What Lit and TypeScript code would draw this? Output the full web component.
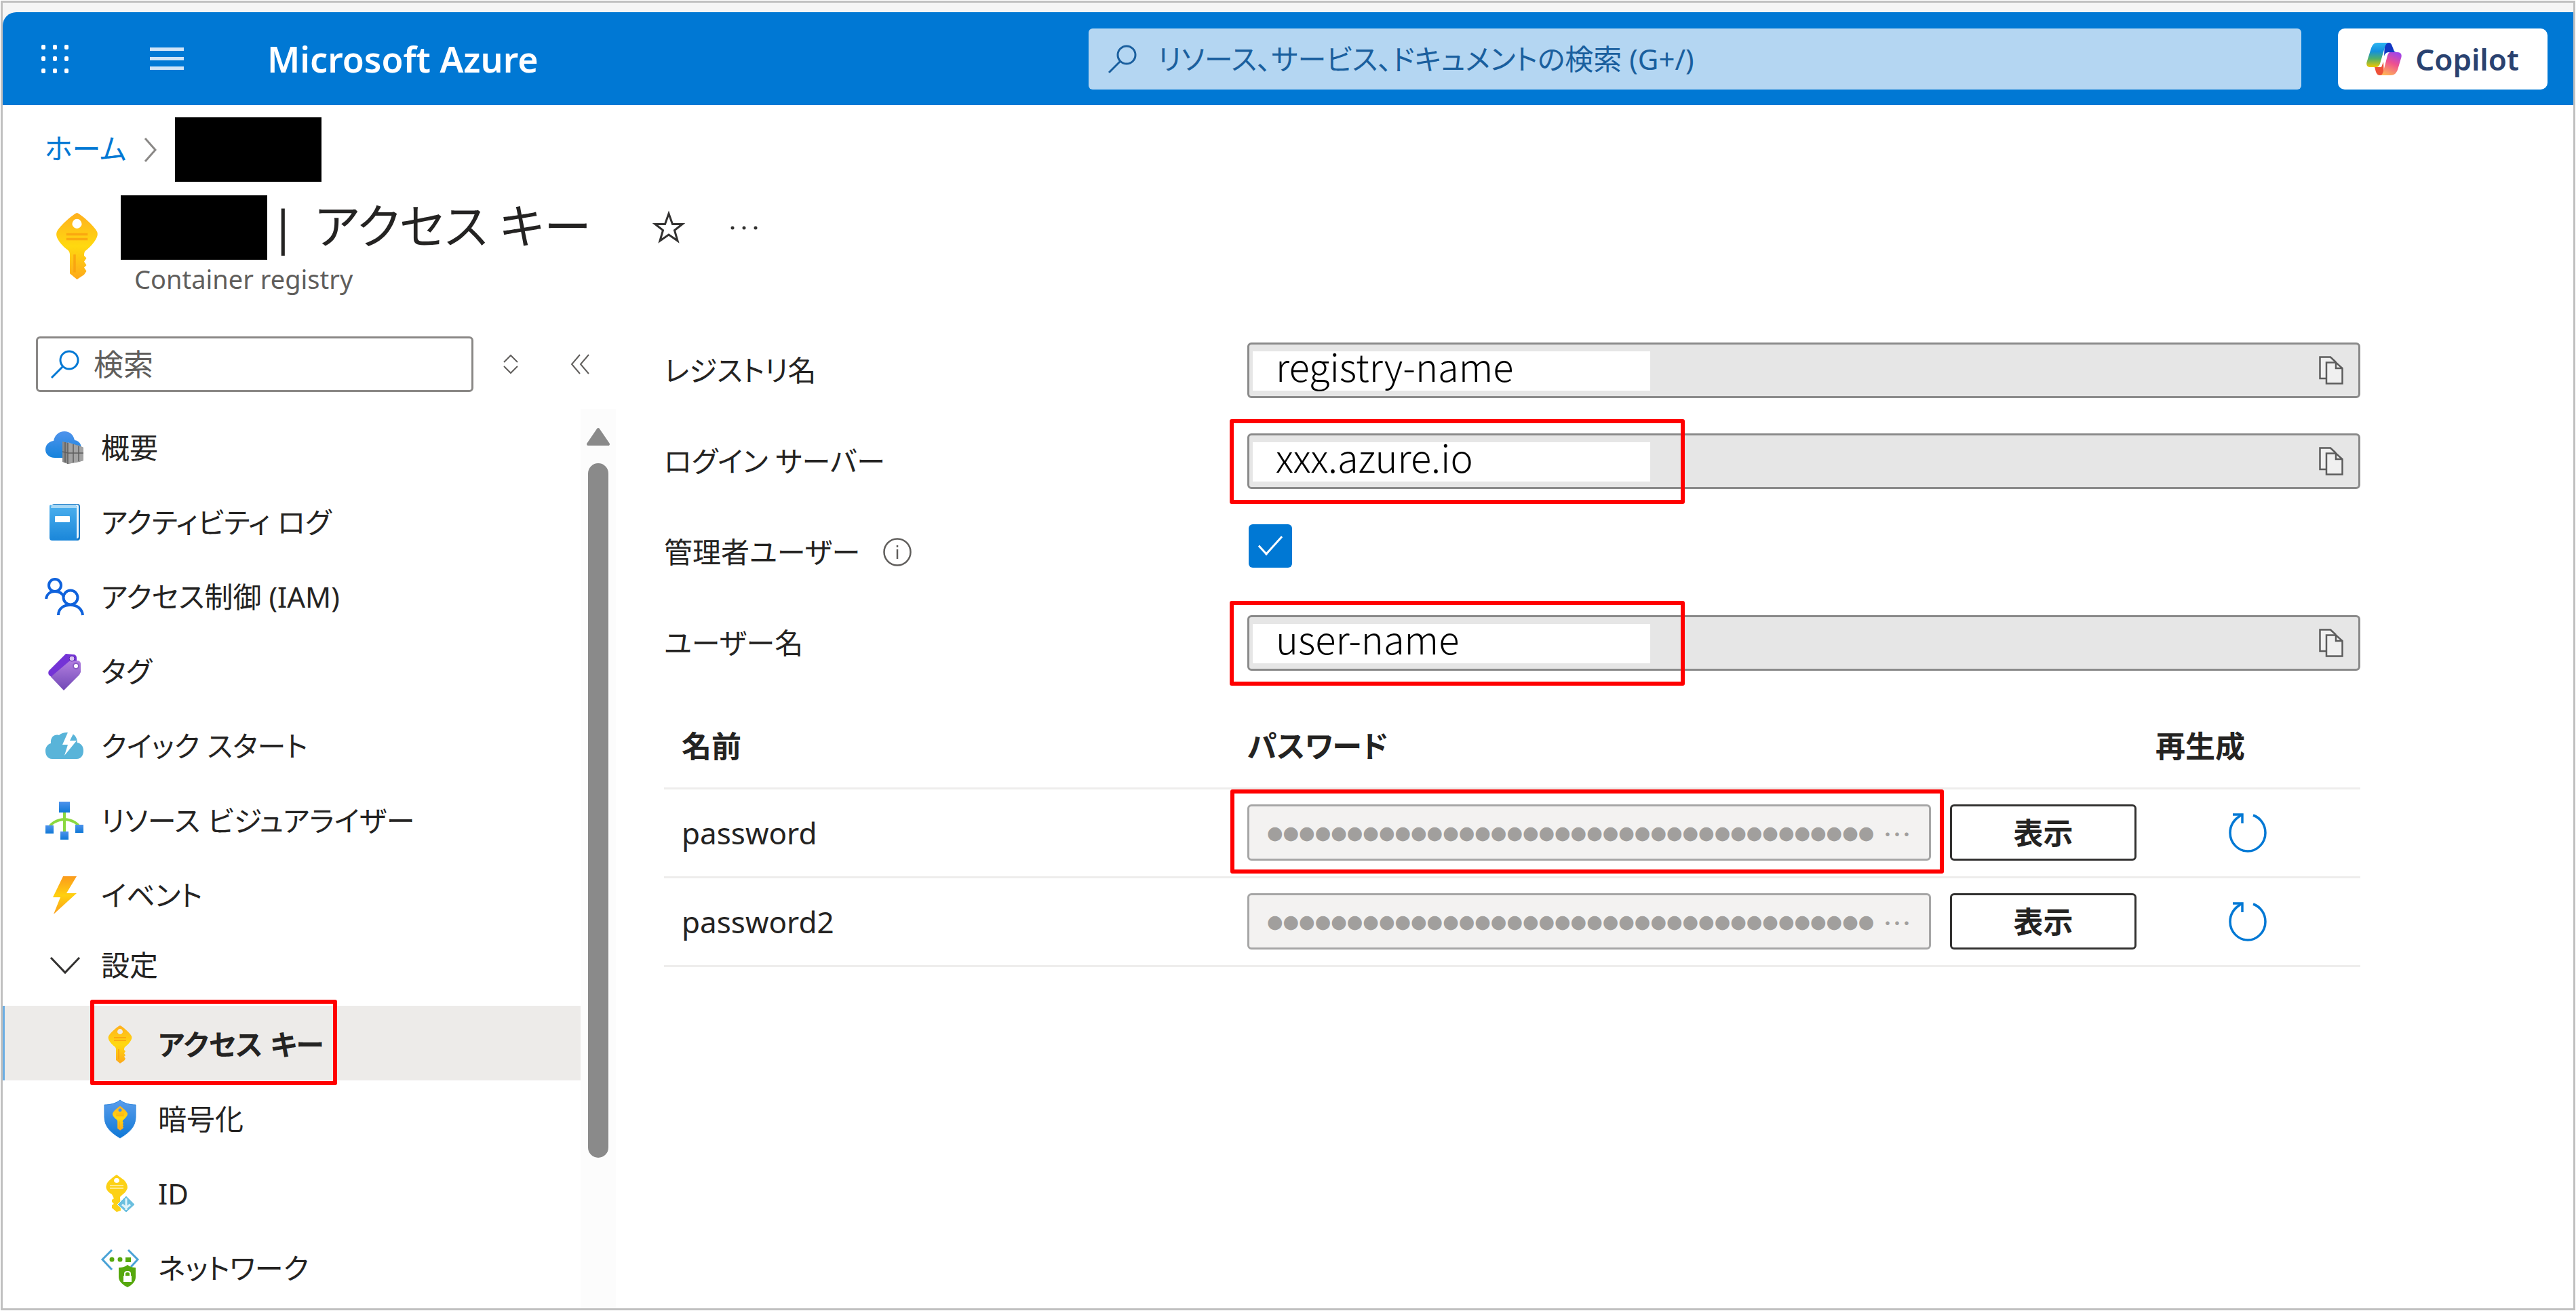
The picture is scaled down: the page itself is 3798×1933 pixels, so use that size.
import { LitElement, html, svg, css, nothing } from "lit";
import { customElement } from "lit/decorators.js";
import { classMap } from "lit/directives/class-map.js";

const keyShape = svg`
  <linearGradient id="gold" x1="0" y1="0" x2="0" y2="1">
    <stop offset="0" stop-color="#ffb01f"></stop><stop offset=".5" stop-color="#ffd90f"></stop><stop offset="1" stop-color="#fda81c"></stop>
  </linearGradient>
  <path fill="url(#gold)" fill-rule="evenodd" d="M18 0C20 0 33 11 35 16C37 21 29 29 25 32C24 33 24 35 24 36L26 38L24 41L26 44L24 46L26 49L24 52L18 56L12 51V35C12 33 11 32 10 31C6 28 -1 21 1 16C3 11 16 0 18 0ZM18 5C16 5 14 7 14 9.500C14 11 16 13 18 13C20 13 22 11 22 9.500C22 7 20 5 18 5Z"></path>
  <path stroke="#f9a010" stroke-width="2" d="M9 18H27M9 22H27M16 35V50" opacity=".8"></path>`;

const icons: Record<string, unknown> = {
  overview: svg`<svg class="ico" viewBox="0 0 56 56" aria-hidden="true">
    <linearGradient id="cl" x1="0" y1="0" x2="0" y2="1"><stop offset="0" stop-color="#4f93ec"></stop><stop offset="1" stop-color="#1583dc"></stop></linearGradient>
    <path fill="url(#cl)" d="M14 43C5 43 0 37 0 31C0 24 5 19 12 18C14 9 20 4 28 4C36 4 41 9 43 17C50 18 53 23 53 30C53 38 48 43 41 43Z"></path>
    <path fill="#8b8b8b" d="M25 19L50 25L56 28V47L50 49L33 52L25 49Z"></path>
    <path fill="#a3a3a3" d="M33 20L56 28V47L33 52Z"></path>
    <path stroke="#5f5f5f" stroke-width="1.500" fill="none" d="M25 34L33 36L56 36M33 21V52M41 23V50M49 26V48M29 20V50"></path></svg>`,
  log: svg`<svg class="ico" viewBox="0 0 56 56" aria-hidden="true">
    <linearGradient id="bk" x1="0" y1="0" x2="0" y2="1"><stop offset="0" stop-color="#4cb0ee"></stop><stop offset="1" stop-color="#1a86d9"></stop></linearGradient>
    <rect x="9" y="1" width="42" height="54" rx="4" fill="#1677c4"></rect><rect x="10" y="2" width="39" height="50" rx="3" fill="#e8f4fc"></rect>
    <path fill="url(#bk)" d="M6 5C6 2 8 2 10 4H46V55H10C8 55 6 54 6 51Z"></path><path fill="#a8d8f5" d="M9 2H45L46 7H8Z"></path>
    <rect x="14" y="19" width="22" height="9" rx="1" fill="#fff"></rect></svg>`,
  iam: svg`<svg class="ico" viewBox="0 0 56 56" aria-hidden="true"><g fill="none" stroke="#0f62dc" stroke-width="4">
    <circle cx="14" cy="11" r="9"></circle><circle cx="37" cy="29" r="10.500"></circle>
    <path d="M1 31C2 23 8 20 14 20C20 20 25 23 27 28M19 55C19 45 27 40 37 40C47 40 54 46 55 55"></path></g></svg>`,
  tag: svg`<svg class="ico" viewBox="0 0 56 56" aria-hidden="true">
    <linearGradient id="tg" x1="0" y1="0" x2="0" y2="1"><stop offset="0" stop-color="#b27fe0"></stop><stop offset="1" stop-color="#7148b5"></stop></linearGradient>
    <path fill="#7433d6" d="M30 2L41 3C44 3 46 5 46 8L46 18L13 40L5 33C4 31 4 29 5 27Z"></path>
    <path fill="url(#tg)" d="M35 13L47 12C50 12 52 14 52 17V29L50 33L27 56L8 36Z"></path>
    <circle cx="39" cy="9" r="4" fill="#d9c1f1" stroke="#5a25b0"></circle><circle cx="45" cy="20" r="4" fill="#fff" stroke="#8a5cc4" stroke-width="2"></circle></svg>`,
  quick: svg`<svg class="ico" viewBox="0 0 56 56" aria-hidden="true">
    <path fill="#59b4d9" d="M10 47C3 47 0 41 0 35C0 29 4 25 8 24C7 14 14 10 20 12C25 7 35 7 40 10C45 13 47 18 47 23C53 24 56 29 56 35C56 41 53 47 46 47Z"></path>
    <path fill="#fff" d="M33 8H42L36 20H46L28 42L33 26H25Z"></path></svg>`,
  graph: svg`<svg class="ico" viewBox="0 0 56 56" aria-hidden="true">
    <linearGradient id="sq" x1="0" y1="0" x2="0" y2="1"><stop offset="0" stop-color="#4f93ec"></stop><stop offset="1" stop-color="#0f78d6"></stop></linearGradient>
    <path fill="none" stroke="#8bd83f" stroke-width="4" d="M28 15V45M6 38C8 32 16 27 28 26C40 27 48 32 50 38"></path>
    <g fill="url(#sq)"><rect x="20" y="0" width="16" height="16"></rect><rect x="0" y="35" width="12" height="12"></rect><rect x="22" y="44" width="12" height="12"></rect><rect x="44" y="34" width="12" height="12"></rect></g></svg>`,
  bolt: svg`<svg class="ico" viewBox="0 0 56 56" aria-hidden="true">
    <linearGradient id="bo" x1="0" y1="0" x2="0" y2="1"><stop offset="0" stop-color="#fb9a1c"></stop><stop offset=".5" stop-color="#ffd00f"></stop><stop offset="1" stop-color="#fa9f1c"></stop></linearGradient>
    <path fill="url(#bo)" d="M26 0H46L31 25H46L12 56L22 31H11Z"></path></svg>`,
  chevron: svg`<svg class="ico" viewBox="0 0 56 56" aria-hidden="true"><path fill="none" stroke="#323130" stroke-width="3" d="M8 17L29 39L50 17"></path></svg>`,
  key: svg`<svg class="ico" viewBox="-10 0 56 56" aria-hidden="true">${keyShape}</svg>`,
  shield: svg`<svg class="ico" viewBox="0 0 56 56" aria-hidden="true">
    <linearGradient id="sh" x1="0" y1="0" x2="0" y2="1"><stop offset="0" stop-color="#5a9dec"></stop><stop offset="1" stop-color="#0f78d6"></stop></linearGradient>
    <path fill="url(#sh)" stroke="#2b84dc" d="M28 0C34 5 43 7 51 7V25C51 40 40 49 28 56C16 49 5 40 5 25V7C13 7 22 5 28 0Z"></path>
    <g transform="translate(16.500 9) scale(.64)">${keyShape}</g></svg>`,
  identity: svg`<svg class="ico" viewBox="0 0 56 56" aria-hidden="true">
    <path fill="#fcd116" fill-rule="evenodd" d="M23 0L34 8C39 13 40 19 38 22C36 27 30 30 28 33L29 53L23 55L16 49V45L19 43L16 40V37L19 35L16 29C9 25 6 20 8 15C9 10 17 4 23 0ZM23 5C20 5 19 7 19 9C19 11 21 12 23 12C25 12 27 11 27 9C27 7 26 5 23 5Z"></path>
    <path stroke="#ffe98a" stroke-width="2" d="M13 16H33M13 20H33"></path>
    <path fill="#6bbfdf" stroke="#fff" stroke-width="1" d="M37 31L50 44L37 56L24 44Z"></path><path stroke="#dff3fa" stroke-width="3" fill="none" d="M37 35V52M31 44L37 49L43 44"></path></svg>`,
  network: svg`<svg class="ico" viewBox="0 0 56 56" aria-hidden="true">
    <path fill="none" stroke="#4aa3d6" stroke-width="3" d="M16 1L2 15L16 30M40 1L54 15L44 26"></path>
    <g fill="#56a80d"><circle cx="16" cy="15" r="3.500"></circle><circle cx="28" cy="15" r="3.500"></circle><rect x="36" y="12" width="8" height="7"></rect>
    <path d="M39 23C43 26 47 27 51 27V41C51 48 45 53 39 56C33 53 26 48 26 41V27C31 27 35 26 39 23Z"></path></g>
    <rect x="33" y="39" width="12" height="9" fill="#fff"></rect><path fill="none" stroke="#fff" stroke-width="2" d="M35 40V36C35 32 43 32 43 36V40"></path></svg>`,
};

const magnifier = svg`<svg class="glass" viewBox="0 0 44 42" aria-hidden="true"><g fill="none" stroke="currentColor" stroke-width="3"><circle cx="28" cy="15" r="13"></circle><path d="M19 24L2 41"></path></g></svg>`;
const copyIcon = svg`<svg class="copy-ico" viewBox="0 0 36 42" aria-hidden="true"><g fill="#f0f0f0" stroke="#5c5c5c" stroke-width="2.500"><path d="M10 33H1.500V1.500H17L25 9"></path><path d="M11 9.500H25L34.500 18V40.500H11Z"></path><path fill="none" d="M25 9.500V18H34.500"></path></g></svg>`;
const refreshIcon = svg`<svg class="refresh-ico" viewBox="0 0 56 58" aria-hidden="true"><g fill="none" stroke="#0078d4" stroke-width="3.500"><path d="M36 3C47 7 54 17 54 29C54 44 42 56 28 56C14 56 2 44 2 29C2 17 9 8 20 2"></path><path d="M6 2H20V15"></path></g></svg>`;
const infoIcon = svg`<svg class="info-ico" viewBox="0 0 42 42" aria-hidden="true"><circle cx="21" cy="21" r="19.500" fill="none" stroke="#605e5c" stroke-width="2.500"></circle><path stroke="#605e5c" stroke-width="2.500" d="M21 17V31M21 11V14"></path></svg>`;

interface NavItem { label: string; icon: string; kind?: "group" | "child"; selected?: boolean }

const navItems: NavItem[] = [
  { label: "概要", icon: "overview" },
  { label: "アクティビティ ログ", icon: "log" },
  { label: "アクセス制御 (IAM)", icon: "iam" },
  { label: "タグ", icon: "tag" },
  { label: "クイック スタート", icon: "quick" },
  { label: "リソース ビジュアライザー", icon: "graph" },
  { label: "イベント", icon: "bolt" },
  { label: "設定", icon: "chevron", kind: "group" },
  { label: "アクセス キー", icon: "key", kind: "child", selected: true },
  { label: "暗号化", icon: "shield", kind: "child" },
  { label: "ID", icon: "identity", kind: "child" },
  { label: "ネットワーク", icon: "network", kind: "child" },
];

@customElement("app-root")
export class AppRoot extends LitElement {
  static styles = css`
    :host {
      display: block;
      box-sizing: border-box;
      min-height: 100vh;
      padding: 1px;
      background: #fff;
      color: #242322;
      font: 42px/60px "Noto Sans", "Noto Sans CJK JP", sans-serif;
      font-feature-settings: "palt";
    }
    *, *::before, *::after { box-sizing: border-box; }
    input, button { font: inherit; font-feature-settings: inherit; color: inherit; margin: 0; }
    button { padding: 0; border: 0; background: none; display: flex; align-items: center; justify-content: center; }
    a { color: inherit; text-decoration: none; }
    svg { display: block; flex: none; overflow: visible; }
    .frame { border: 3px solid #c0c0c0; min-height: calc(100vh - 2px); display: flex; flex-direction: column; }
    .strip { background: #f5f5f5; padding-top: 14px; }
    .topbar { height: 137px; background: #0078d4; border-top-left-radius: 20px; display: flex; align-items: center; padding: 0 38px 0 57px; gap: 54px; }
    .topbar-start { flex: 0 0 1490px; display: flex; align-items: center; }
    .apps { width: 40px; height: 42px; margin-right: 120px; }
    .menu { width: 50px; height: 36px; margin-right: 123px; }
    .brand { color: #fff; font-weight: 600; font-size: 52px; }
    .global-search { flex: 1; height: 90px; display: flex; align-items: center; gap: 30px; padding: 0 28px; border-radius: 6px; background: #b4d6f2; color: #1a5f9e; }
    .global-search input, .side-search input { flex: 1; min-width: 0; border: 0; padding: 0; background: transparent; outline: 0; height: 60px; }
    .global-search input::placeholder { color: #1a5f9e; opacity: 1; }
    .side-search input { font-size: 44px; }
    .glass { width: 44px; height: 42px; }
    .copilot { flex: 0 0 309px; height: 90px; border-radius: 10px; background: #fff; color: #2a4270; font-size: 44px; font-weight: 600; gap: 20px; }
    .copilot-ico { width: 52px; height: 48px; }

    .crumbs { display: flex; align-items: center; gap: 27px; padding: 18px 0 0 62px; height: 113px; }
    .crumbs a { color: #0078d4; padding-bottom: 4px; }
    .crumb-sep { width: 18px; height: 34px; }
    .redacted { display: block; width: 216px; height: 95px; background: #000; flex: none; }
    .title-row { display: flex; padding: 20px 0 8px 78px; align-items: flex-start; }
    .title-ico { width: 63px; height: 98px; margin: 26px 33px 0 0; }
    .heading { display: flex; flex-direction: column; }
    .heading-line { display: flex; align-items: center; height: 95px; }
    h1 { margin: 0 92px 6px 4px; font-weight: 400; font-size: 70px; line-height: 88px; display: flex; gap: 28px; }
    .star { width: 46px; height: 46px; margin-right: 68px; }
    .dots { width: 40px; height: 20px; }
    .subtitle { margin: 0; padding-left: 20px; font-size: 38px; line-height: 56px; color: #605e5c; }

    .body { flex: 1; display: flex; align-items: stretch; }
    .side { flex: 0 0 904px; display: flex; flex-direction: column; padding-top: 49px; }
    .side-tools { display: flex; align-items: center; padding-left: 49px; height: 82px; }
    .side-search { width: 645px; height: 82px; display: flex; align-items: center; gap: 20px; padding: 0 18px; border: 3px solid #8a8886; border-radius: 6px; color: #0078d4; margin-right: 43px; }
    .side-search input { color: #605e5c; }
    .side-search input::placeholder { color: #605e5c; opacity: 1; }
    .sort { width: 24px; height: 30px; margin-right: 76px; }
    .fold { width: 28px; height: 30px; }
    .side-scroll { flex: 1; display: flex; padding-top: 25px; }
    nav { flex: 1; }
    ul { list-style: none; margin: 0; padding: 0; }
    .item { position: relative; display: flex; align-items: center; gap: 26px; height: 110px; padding: 4px 0 0 63px; }
    .item.group { padding: 0 0 10px 63px; width: 100%; }
    .item.child { padding-left: 145px; gap: 28px; }
    .item.selected { background: #edebe9; font-weight: 600; border-left: 3px solid #6caee4; padding-left: 142px; }
    .ico { width: 56px; height: 56px; }
    .group { justify-content: flex-start; }
    .mark { position: absolute; border: 6px solid #f00; border-radius: 3px; pointer-events: none; }
    .mark.nav { left: 126px; top: -9px; width: 364px; height: 126px; }
    .mark.field-mark { left: -29px; top: -24px; width: 671px; height: 125px; }
    .mark.pass-mark { left: -28px; right: -22px; top: -25px; bottom: -22px; }
    .scroll { width: 52px; background: #fcfcfc; display: flex; flex-direction: column; align-items: center; gap: 26px; padding-top: 28px; }
    .scroll-up { width: 34px; height: 26px; }
    .thumb { width: 30px; height: 1024px; border-radius: 15px; background: #8a8a8a; }

    main { flex: 1; min-width: 0; padding: 58px 314px 0 71px; }
    .row { display: grid; grid-template-columns: 860px 1fr; height: 82px; margin-bottom: 52px; align-items: center; }
    .row.last { margin-bottom: 50px; }
    .label { display: flex; align-items: center; gap: 34px; }
    .info-ico { width: 42px; height: 42px; }
    .field { position: relative; display: flex; align-items: center; height: 82px; padding: 0 22px 0 5px; border: 3px solid #8a8a8a; border-radius: 6px; background: #e6e6e6; justify-content: space-between; }
    .value { width: 586px; height: 76px; margin-bottom: 14px; border: 0; padding: 0 0 0 34px; background: linear-gradient(#fff, #fff) 0 17px / 586px 58px no-repeat; color: #000; font: 300 56px/76px "Noto Sans CJK JP", sans-serif; font-feature-settings: normal; outline: 0; }
    .copy-ico { width: 36px; height: 42px; }
    .check { appearance: none; width: 64px; height: 64px; margin: 0 0 0 2px; align-self: start; border-radius: 6px; background: #0078d4; display: grid; place-items: center; }
    .check::before { content: ""; width: 36px; height: 18px; border-left: 3px solid #fff; border-bottom: 3px solid #fff; transform: translateY(-6px) rotate(-48deg) skewX(-6deg); }

    table { width: 100%; border-collapse: collapse; table-layout: fixed; font-size: 44px; }
    th, td { padding: 0; text-align: left; border-bottom: 3px solid #eeedec; }
    th { height: 123px; font-weight: 600; }
    td { height: 131px; }
    .c-name { width: 860px; }
    .c-regen { width: 302px; }
    th:first-child, td:first-child { padding-left: 26px; }
    .secret { display: flex; gap: 28px; }
    .mask { position: relative; flex: 1; display: flex; align-items: center; height: 83px; padding: 0 26px; border: 3px solid #a6a6a6; border-radius: 6px; background: #f3f2f1; color: #a19f9d; }
    .mask input { flex: 1; min-width: 0; border: 0; padding: 0; background: transparent; outline: 0; font: 27px/40px "DejaVu Sans", sans-serif; }
    .more { font: 42px/46px "Noto Sans CJK JP", sans-serif; font-feature-settings: normal; }
    .show { flex: 0 0 275px; height: 83px; border: 3px solid #323130; border-radius: 6px; font-weight: 600; background: #fff; }
    .show-cell { padding-right: 28px; }
    .regen { margin-left: 108px; }
    .refresh-ico { width: 56px; height: 58px; }
  `;

  private renderNav(item: NavItem) {
    const cls = classMap({ item: true, [item.kind ?? "top"]: true, selected: !!item.selected });
    const inner = html`${icons[item.icon]}<span>${item.label}</span>${item.selected ? html`<i class="mark nav"></i>` : nothing}`;
    return html`<li>${item.kind === "group"
      ? html`<button class=${cls} aria-expanded="true">${inner}</button>`
      : html`<a class=${cls} href="#">${inner}</a>`}</li>`;
  }

  private renderField(id: string, label: string, value: string, marked: boolean, last = false) {
    return html`<div class=${classMap({ row: true, last })}>
      <label class="label" for=${id}>${label}</label>
      <div class="field">
        <input class="value" id=${id} readonly .value=${value} />
        <button aria-label="コピー">${copyIcon}</button>
        ${marked ? html`<i class="mark field-mark"></i>` : nothing}
      </div>
    </div>`;
  }

  private renderPassword(name: string, marked: boolean) {
    return html`<tr>
      <td><label for=${name}>${name}</label></td>
      <td class="show-cell"><div class="secret">
        <div class="mask">
          <input id=${name} readonly .value=${"●".repeat(38)} /><span class="more">…</span>
          ${marked ? html`<i class="mark pass-mark"></i>` : nothing}
        </div>
        <button class="show">表示</button>
      </div></td>
      <td><button class="regen" aria-label="再生成">${refreshIcon}</button></td>
    </tr>`;
  }

  render() {
    return html`<div class="frame">
      <div class="strip">
        <header class="topbar">
          <div class="topbar-start">
            <button class="apps" aria-label="アプリ"><svg viewBox="0 0 40 42" width="40" height="42"><g fill="#fff">${[0, 17, 34].map((x) => [0, 17, 35].map((y) => svg`<rect x=${x} y=${y} width="6" height="7" rx="2"></rect>`))}</g></svg></button>
            <button class="menu" aria-label="メニュー"><svg viewBox="0 0 50 36" width="50" height="36"><path stroke="#cfe4f7" stroke-width="5" d="M0 3.500H50M0 17.500H50M0 31.500H50"></path></svg></button>
            <a class="brand" href="#">Microsoft Azure</a>
          </div>
          <label class="global-search">${magnifier}<input type="text" placeholder="リソース、サービス、ドキュメントの検索 (G+/)" /></label>
          <button class="copilot">
            <svg class="copilot-ico" viewBox="0 0 52 48" aria-hidden="true">
              <linearGradient id="ca" x1="0" y1="0" x2="0" y2="1"><stop offset="0" stop-color="#2db5f0"></stop><stop offset=".35" stop-color="#1390df"></stop><stop offset=".65" stop-color="#4fae6a"></stop><stop offset="1" stop-color="#f0c800"></stop></linearGradient>
              <linearGradient id="cb" x1=".7" y1="0" x2=".3" y2="1"><stop offset="0" stop-color="#a245e8"></stop><stop offset=".45" stop-color="#ee5090"></stop><stop offset="1" stop-color="#ffb357"></stop></linearGradient>
              <path fill="#1238c4" d="M27 0H33C36 0 37 2 38 5L40 10C41 13 42 14 45 14H33C29 14 27 17 26 20Z"></path>
              <path fill="#ee5138" d="M25 28L22 36H12C13 38 13 40 14 43C15 46 17 48 20 48H26Z"></path>
              <path fill="url(#ca)" d="M16 0H33C30 0 28 3 27 7L20 31C19 34 17 36 14 36H5C1 36-1 32 1 27L7 8C9 3 11 0 16 0Z"></path>
              <path fill="url(#cb)" d="M35 14H46C51 14 53 18 51 23L46 40C44 45 41 48 36 48H20C23 48 24 45 25 42L31 19C32 16 33 14 35 14Z"></path>
            </svg>Copilot</button>
        </header>
      </div>

      <div class="crumbs">
        <a href="#">ホーム</a>
        <svg class="crumb-sep" viewBox="0 0 18 34" aria-hidden="true"><path fill="none" stroke="#8a8886" stroke-width="3" d="M1 0L16 17L1 34"></path></svg>
        <span class="redacted"></span>
      </div>

      <div class="title-row">
        <svg class="title-ico" viewBox="0 0 36 56" aria-hidden="true">${keyShape}</svg>
        <div class="heading">
          <div class="heading-line">
            <span class="redacted"></span>
            <h1><span>|</span><span>アクセス キー</span></h1>
            <button class="star" aria-label="お気に入り"><svg width="46" height="46" viewBox="0 0 46 46"><path fill="none" stroke="#323130" stroke-width="3" d="M23 2L28.500 17.500H43L31.500 26.500L36 42L23 33L10 42L14.500 26.500L3 17.500H17.500Z"></path></svg></button>
            <button class="dots" aria-label="その他"><svg width="40" height="6" viewBox="0 0 40 6"><g fill="#323130"><circle cx="3" cy="3" r="2.500"></circle><circle cx="20" cy="3" r="2.500"></circle><circle cx="37" cy="3" r="2.500"></circle></g></svg></button>
          </div>
          <p class="subtitle">Container registry</p>
        </div>
      </div>

      <div class="body">
        <aside class="side">
          <div class="side-tools">
            <label class="side-search">${magnifier}<input type="text" placeholder="検索" /></label>
            <button class="sort" aria-label="並べ替え"><svg width="24" height="30" viewBox="0 0 24 30"><path fill="none" stroke="#605e5c" stroke-width="2" d="M2 12L12 2L22 12M2 18L12 28L22 18"></path></svg></button>
            <button class="fold" aria-label="折りたたむ"><svg width="28" height="30" viewBox="0 0 28 30"><path fill="none" stroke="#605e5c" stroke-width="2" d="M14 1L2 15L14 29M27 1L15 15L27 29"></path></svg></button>
          </div>
          <div class="side-scroll">
            <nav><ul>${navItems.map((i) => this.renderNav(i))}</ul></nav>
            <div class="scroll" aria-hidden="true">
              <svg class="scroll-up" viewBox="0 0 34 26"><path fill="#8a8a8a" stroke="#8a8a8a" stroke-width="4" stroke-linejoin="round" d="M17 2L32 24H2Z"></path></svg>
              <div class="thumb"></div>
            </div>
          </div>
        </aside>

        <main>
          ${this.renderField("registry", "レジストリ名", "registry-name", false)}
          ${this.renderField("server", "ログイン サーバー", "xxx.azure.io", true)}
          <div class="row">
            <label class="label" for="admin">管理者ユーザー${infoIcon}</label>
            <input class="check" type="checkbox" id="admin" checked />
          </div>
          ${this.renderField("user", "ユーザー名", "user-name", true, true)}
          <table>
            <thead><tr><th class="c-name">名前</th><th>パスワード</th><th class="c-regen">再生成</th></tr></thead>
            <tbody>${this.renderPassword("password", true)}${this.renderPassword("password2", false)}</tbody>
          </table>
        </main>
      </div>
    </div>`;
  }
}
